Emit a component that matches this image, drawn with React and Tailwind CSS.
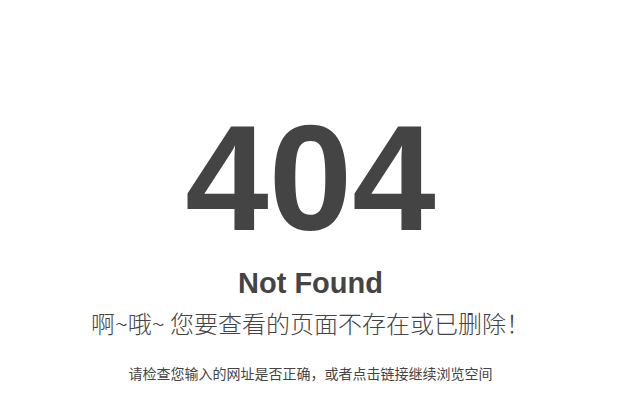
import React from "react";

export default function App() {
  return (
    <div className="min-h-[401px] w-full bg-white text-[#444] flex flex-col items-center pt-[103px] font-['Liberation_Sans','Noto_Sans_CJK_SC',sans-serif]">
      <h1 className="text-[150px] font-bold leading-[150px]">404</h1>
      <h2 className="mt-[13px] text-[29px] font-bold leading-[34px]">Not Found</h2>
      <p className="mt-[8px] text-[24px] leading-[30px] font-['Noto_Sans_CJK_SC',sans-serif] font-light">
        啊~哦~ 您要查看的页面不存在或已删除！
      </p>
      <p className="mt-[25px] text-[14px] leading-[20px] font-['Noto_Sans_CJK_SC',sans-serif]">
        请检查您输入的网址是否正确，或者点击链接继续浏览空间
      </p>
    </div>
  );
}
